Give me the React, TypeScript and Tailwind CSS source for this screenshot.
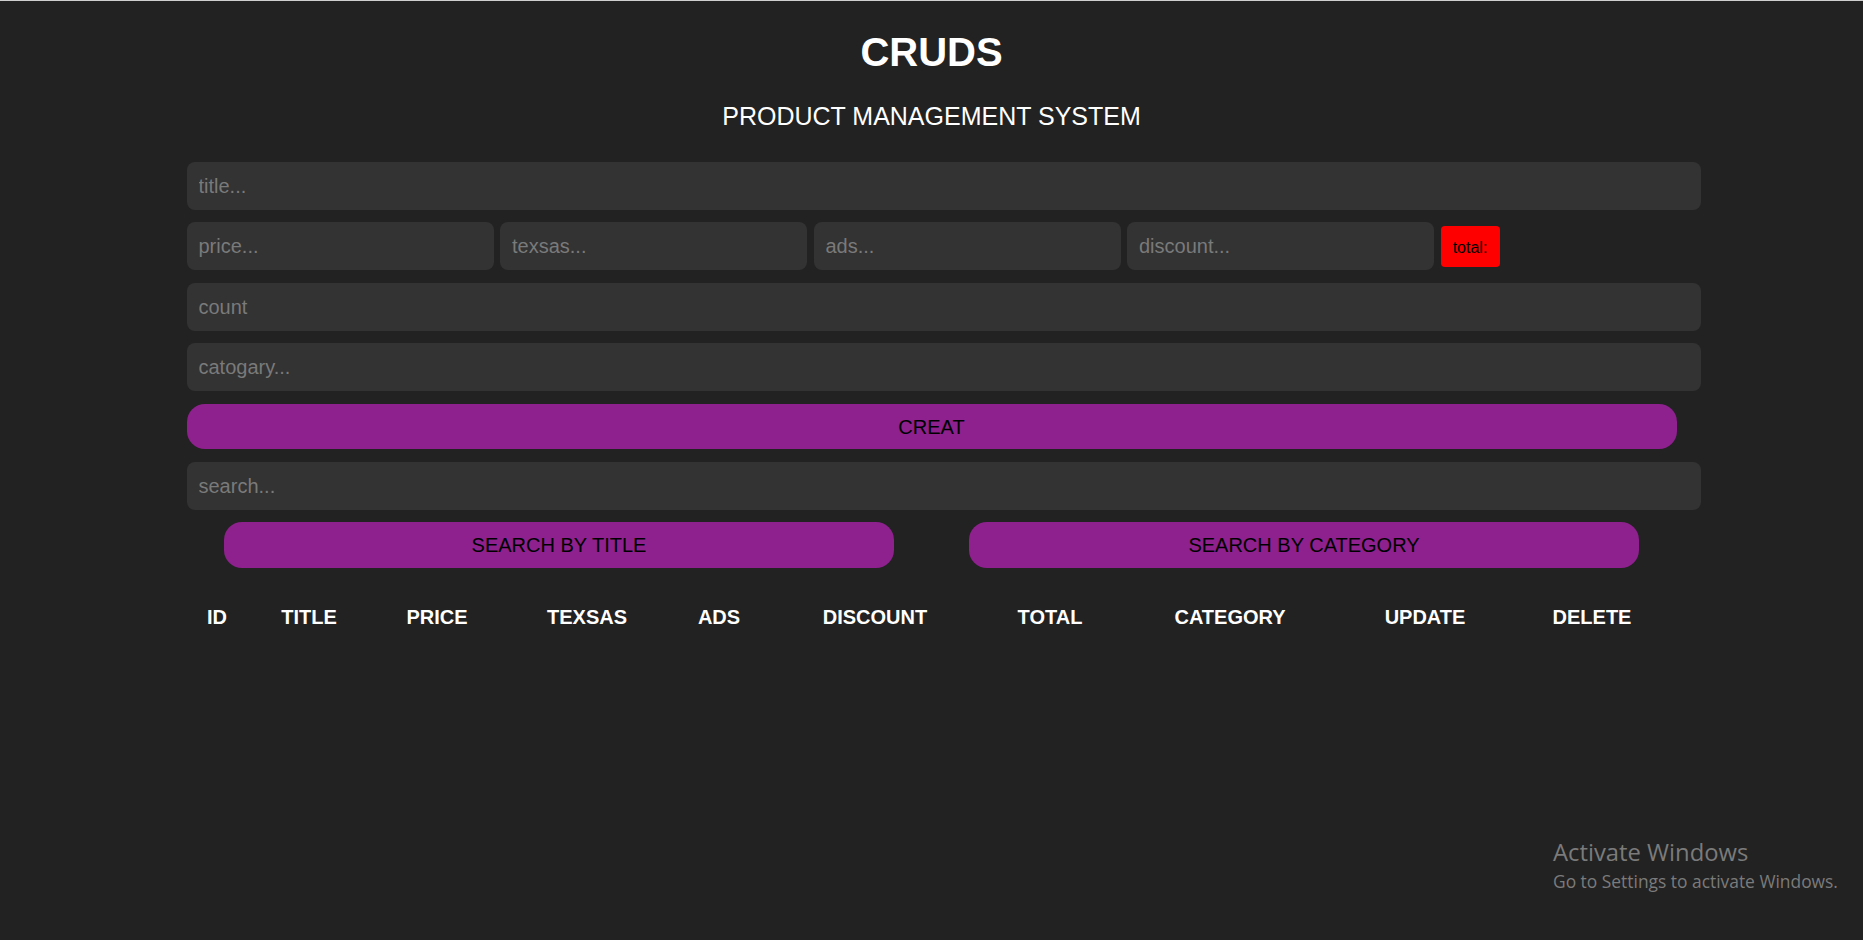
import React from "react";

const inputCls =
  "h-[48px] rounded-[8px] bg-[#333333] px-[12px] text-[20px] text-white placeholder:text-[#7a7a7a] outline-none";

const btnCls =
  "h-[45px] rounded-[18px] bg-[#8e218e] text-[20px] text-black";

const columns = [
  { label: "ID", w: "w-[61px]" },
  { label: "TITLE", w: "w-[123px]" },
  { label: "PRICE", w: "w-[133px]" },
  { label: "TEXSAS", w: "w-[167px]" },
  { label: "ADS", w: "w-[97px]" },
  { label: "DISCOUNT", w: "w-[215px]" },
  { label: "TOTAL", w: "w-[135px]" },
  { label: "CATEGORY", w: "w-[225px]" },
  { label: "UPDATE", w: "w-[165px]" },
  { label: "DELETE", w: "w-[169px]" },
];

export default function App() {
  return (
    <div
      className="relative min-h-[940px] w-full border-t border-[#cfcfcf] bg-[#222222] text-white"
      style={{ fontFamily: '"Liberation Sans", Arial, sans-serif' }}
    >
      {/* Header */}
      <div className="pt-[28px] text-center">
        <h1 className="text-[40px] font-bold leading-[46px]">CRUDS</h1>
        <h2 className="mt-[27px] text-[25px] leading-[29px]">PRODUCT MANAGEMENT SYSTEM</h2>
      </div>

      {/* Form */}
      <div className="mx-auto mt-[31px] flex w-[1490px] flex-col">
        <input className={`${inputCls} w-[1514px]`} placeholder="title..." />

        <div className="mt-[12px] flex items-center gap-[6.5px]">
          <input className={`${inputCls} w-[307px]`} placeholder="price..." />
          <input className={`${inputCls} w-[307px]`} placeholder="texsas..." />
          <input className={`${inputCls} w-[307px]`} placeholder="ads..." />
          <input className={`${inputCls} w-[307px]`} placeholder="discount..." />
          <small className="flex h-[41px] w-[59px] items-center justify-center rounded-[4px] bg-[#ff0000] pt-[4px] text-[16px] text-black">
            total:
          </small>
        </div>

        <input className={`${inputCls} mt-[13px] w-[1514px]`} placeholder="count" />
        <input className={`${inputCls} mt-[12px] w-[1514px]`} placeholder="catogary..." />

        <button className={`${btnCls} mt-[13px] w-full`}>CREAT</button>

        <input className={`${inputCls} mt-[13px] w-[1514px]`} placeholder="search..." />

        <div className="mt-[12px] flex justify-around">
          <button className={`${btnCls} h-[46px] w-[670px]`}>SEARCH BY TITLE</button>
          <button className={`${btnCls} h-[46px] w-[670px]`}>SEARCH BY CATEGORY</button>
        </div>

        {/* Table */}
        <table className="mt-[38px] w-full table-fixed">
          <thead>
            <tr>
              {columns.map((c) => (
                <th key={c.label} className={`${c.w} p-0 text-center text-[20px] font-bold leading-[23px]`}>
                  {c.label}
                </th>
              ))}
            </tr>
          </thead>
          <tbody></tbody>
        </table>
      </div>

      {/* Windows watermark */}
      <div
        className="absolute left-[1553px] top-[835px] text-[#7b7b7b]"
        style={{ fontFamily: '"Open Sans", "Noto Sans", sans-serif' }}
      >
        <div className="text-[23.8px] leading-[32px]">Activate Windows</div>
        <div className="text-[17.4px] leading-[26px]">Go to Settings to activate Windows.</div>
      </div>
    </div>
  );
}
